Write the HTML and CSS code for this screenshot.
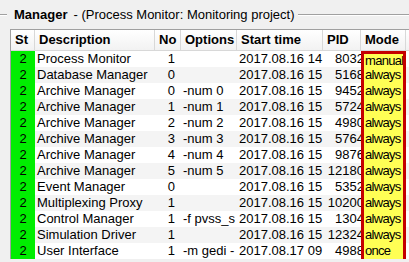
FILE: index.html
```html
<!DOCTYPE html>
<html lang="en">
<head>
    <meta charset="UTF-8" />
    <link rel="stylesheet" href="styles.css">
</head>
<body>

<div class="group">
    <div class="legend">
        <span class="rule short"></span>
        <b class="title">Manager</b>
        <span class="sub">- (Process Monitor: Monitoring project)</span>
        <span class="rule long"></span>
    </div>

    <div class="frame">
        <div class="row head">
            <div class="cell">St</div>
            <div class="cell">Description</div>
            <div class="cell">No</div>
            <div class="cell">Options</div>
            <div class="cell">Start time</div>
            <div class="cell">PID</div>
            <div class="cell">Mode</div>
        </div>

        <div class="row">
            <div class="cell st">2</div>
            <div class="cell">Process Monitor</div>
            <div class="cell num">1</div>
            <div class="cell"></div>
            <div class="cell">2017.08.16 14</div>
            <div class="cell pid"><span>8032</span></div>
            <div class="cell mode first">manual</div>
        </div>
        <div class="row">
            <div class="cell st">2</div>
            <div class="cell">Database Manager</div>
            <div class="cell num">0</div>
            <div class="cell"></div>
            <div class="cell">2017.08.16 15</div>
            <div class="cell pid"><span>5168</span></div>
            <div class="cell mode">always</div>
        </div>
        <div class="row">
            <div class="cell st">2</div>
            <div class="cell">Archive Manager</div>
            <div class="cell num">0</div>
            <div class="cell">-num 0</div>
            <div class="cell">2017.08.16 15</div>
            <div class="cell pid"><span>9452</span></div>
            <div class="cell mode">always</div>
        </div>
        <div class="row">
            <div class="cell st">2</div>
            <div class="cell">Archive Manager</div>
            <div class="cell num">1</div>
            <div class="cell">-num 1</div>
            <div class="cell">2017.08.16 15</div>
            <div class="cell pid"><span>5724</span></div>
            <div class="cell mode">always</div>
        </div>
        <div class="row">
            <div class="cell st">2</div>
            <div class="cell">Archive Manager</div>
            <div class="cell num">2</div>
            <div class="cell">-num 2</div>
            <div class="cell">2017.08.16 15</div>
            <div class="cell pid"><span>4980</span></div>
            <div class="cell mode">always</div>
        </div>
        <div class="row">
            <div class="cell st">2</div>
            <div class="cell">Archive Manager</div>
            <div class="cell num">3</div>
            <div class="cell">-num 3</div>
            <div class="cell">2017.08.16 15</div>
            <div class="cell pid"><span>5764</span></div>
            <div class="cell mode">always</div>
        </div>
        <div class="row">
            <div class="cell st">2</div>
            <div class="cell">Archive Manager</div>
            <div class="cell num">4</div>
            <div class="cell">-num 4</div>
            <div class="cell">2017.08.16 15</div>
            <div class="cell pid"><span>9876</span></div>
            <div class="cell mode">always</div>
        </div>
        <div class="row">
            <div class="cell st">2</div>
            <div class="cell">Archive Manager</div>
            <div class="cell num">5</div>
            <div class="cell">-num 5</div>
            <div class="cell">2017.08.16 15</div>
            <div class="cell pid"><span>12180</span></div>
            <div class="cell mode">always</div>
        </div>
        <div class="row">
            <div class="cell st">2</div>
            <div class="cell">Event Manager</div>
            <div class="cell num">0</div>
            <div class="cell"></div>
            <div class="cell">2017.08.16 15</div>
            <div class="cell pid"><span>5352</span></div>
            <div class="cell mode">always</div>
        </div>
        <div class="row">
            <div class="cell st">2</div>
            <div class="cell">Multiplexing Proxy</div>
            <div class="cell num">1</div>
            <div class="cell"></div>
            <div class="cell">2017.08.16 15</div>
            <div class="cell pid"><span>10200</span></div>
            <div class="cell mode">always</div>
        </div>
        <div class="row">
            <div class="cell st">2</div>
            <div class="cell">Control Manager</div>
            <div class="cell num">1</div>
            <div class="cell">-f pvss_s</div>
            <div class="cell">2017.08.16 15</div>
            <div class="cell pid"><span>1304</span></div>
            <div class="cell mode">always</div>
        </div>
        <div class="row">
            <div class="cell st">2</div>
            <div class="cell">Simulation Driver</div>
            <div class="cell num">1</div>
            <div class="cell"></div>
            <div class="cell">2017.08.16 15</div>
            <div class="cell pid"><span>12324</span></div>
            <div class="cell mode">always</div>
        </div>
        <div class="row">
            <div class="cell st">2</div>
            <div class="cell">User Interface</div>
            <div class="cell num">1</div>
            <div class="cell">-m gedi -</div>
            <div class="cell">2017.08.17 09</div>
            <div class="cell pid"><span>4988</span></div>
            <div class="cell mode last">once</div>
        </div>
    </div>
</div>

</body>
</html>
```

FILE: styles.css
```css
body {
    font-family: 'Liberation Sans', Arial, sans-serif;
    font-size: 13px;
    background-color: #f0f0f0;
    margin: 0;
    padding: 0;
    color: #000000;
    overflow: hidden;
}

.legend {
    display: flex;
    align-items: center;
    height: 29px;
    white-space: nowrap;
}

.rule {
    height: 1px;
    background-color: #a0a0a0;
    border-bottom: 1px solid #ffffff;
}

.rule.short {
    width: 7px;
    margin-right: 7px;
}

.rule.long {
    flex: 1;
    margin-left: 3px;
}

.title {
    font-weight: bold;
    margin-right: 6px;
}

.frame {
    margin-left: 10px;
    border-left: 1px solid #a0a0a0;
    border-top: 1px solid #a0a0a0;
    background-color: #ffffff;
}

.row {
    display: grid;
    grid-template-columns: 24px 120px 26px 56px 86px 38px 45px;
    height: 16px;
    line-height: 16px;
    white-space: nowrap;
}

.row:nth-child(odd) {
    background-color: #f4f4f4;
}

.cell {
    padding-left: 2px;
    overflow: hidden;
}

.row.head {
    height: 20px;
    line-height: 20px;
    font-weight: bold;
    background: linear-gradient(#ffffff, #f2f2f2);
    border-bottom: 1px solid #d8d8d8;
    box-sizing: content-box;
}

.row.head .cell {
    padding-left: 4px;
    border-right: 1px solid #d8d8d8;
}

.st {
    background-color: #00ee00;
    text-align: center;
    padding-left: 0;
}

.num {
    text-align: right;
    padding-right: 6px;
}

.pid {
    display: flex;
    justify-content: flex-end;
}

.pid span {
    margin-right: -3px;
}

.mode {
    background-color: #ffff55;
    border-left: 3px solid #c40000;
    border-right: 3px solid #c40000;
    padding-left: 1px;
    letter-spacing: -0.7px;
}

.mode.first {
    border-top: 3px solid #c40000;
    line-height: 13px;
    height: 13px;
}

.mode.last {
    border-bottom: 3px solid #c40000;
    height: 16px;
}
```
